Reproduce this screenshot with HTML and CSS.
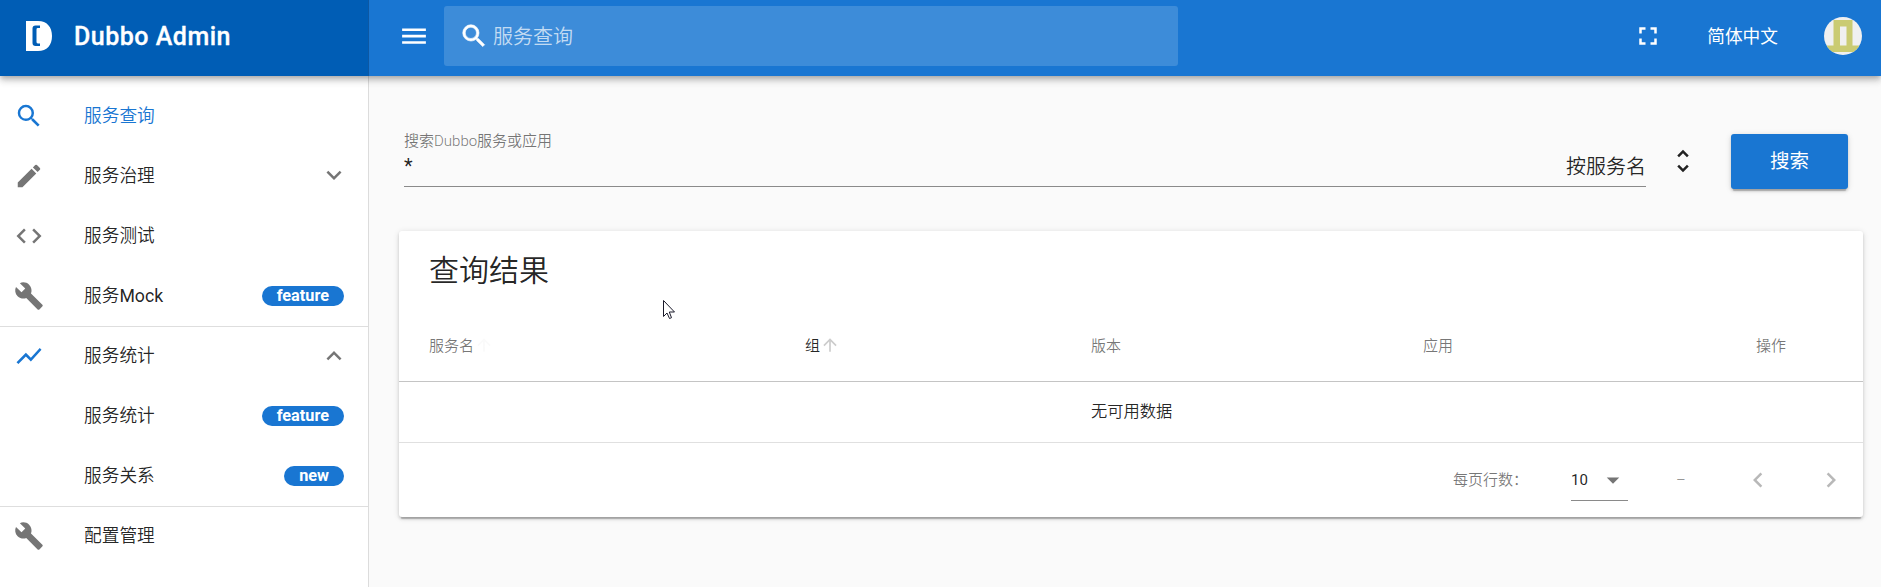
FILE: index.html
```html
<!DOCTYPE html>
<html lang="zh-CN">
<head>
<meta charset="utf-8">
<title>Dubbo Admin</title>
<link rel="stylesheet" href="styles.css">
</head>
<body>
<svg class="defs" width="0" height="0">
  <symbol id="search" viewBox="0 0 24 24"><path d="M15.5 14h-.79l-.28-.27A6.47 6.47 0 0 0 16 9.5 6.5 6.5 0 1 0 9.5 16c1.61 0 3.09-.59 4.23-1.57l.27.28v.79l5 4.99L20.49 19l-4.99-5zm-6 0C7.01 14 5 11.99 5 9.5S7.01 5 9.5 5 14 7.01 14 9.5 11.99 14 9.5 14z"/></symbol>
  <symbol id="edit" viewBox="0 0 24 24"><path d="M3 17.25V21h3.75L17.81 9.94l-3.75-3.75L3 17.25zM20.71 7.04a1 1 0 0 0 0-1.41l-2.34-2.34a1 1 0 0 0-1.41 0l-1.83 1.83 3.75 3.75 1.83-1.83z"/></symbol>
  <symbol id="code" viewBox="0 0 24 24"><path d="M9.4 16.6L4.8 12l4.6-4.6L8 6l-6 6 6 6 1.4-1.4zm5.2 0l4.6-4.6-4.6-4.6L16 6l6 6-6 6-1.4-1.4z"/></symbol>
  <symbol id="build" viewBox="0 0 24 24"><path d="M22.7 19l-9.1-9.1c.9-2.3.4-5-1.5-6.9-2-2-5-2.4-7.4-1.3L9 6 6 9 1.6 4.7C.4 7.1.9 10.1 2.9 12.1c1.900 1.900 4.600 2.400 6.900 1.500l9.100 9.100c.400.400 1 .400 1.400 0l2.300-2.300c.500-.400.500-1.100.100-1.400z"/></symbol>
  <symbol id="chart" viewBox="0 0 24 24"><path d="M3.5 18.49l6-6.01 4 4L22 6.92l-1.41-1.41-7.09 7.97-4-4L2 16.99z"/></symbol>
  <symbol id="down" viewBox="0 0 24 24"><path d="M7.41 7.84L12 12.42l4.59-4.58L18 9.25l-6 6-6-6z"/></symbol>
  <symbol id="up" viewBox="0 0 24 24"><path d="M7.41 15.41L12 10.83l4.59 4.58L18 14l-6-6-6 6z"/></symbol>
  <symbol id="left" viewBox="0 0 24 24"><path d="M15.41 7.41L14 6l-6 6 6 6 1.41-1.41L10.83 12z"/></symbol>
  <symbol id="right" viewBox="0 0 24 24"><path d="M10 6L8.59 7.41 13.17 12l-4.58 4.59L10 18l6-6z"/></symbol>
  <symbol id="menu" viewBox="0 0 24 24"><path d="M2.500 18.200h19v-2.100h-19v2.100zm0-5.100h19V11h-19v2.100zm0-7.200V8h19V5.900h-19z"/></symbol>
  <symbol id="full" viewBox="0 0 24 24"><path d="M7 14H5v5h5v-2H7v-3zm-2-4h2V7h3V5H5v5zm12 7h-3v2h5v-5h-2v3zM14 5v2h3v3h2V5h-5z"/></symbol>
  <symbol id="unfold" viewBox="0 0 24 24"><path d="M12 5.83L15.17 9l1.41-1.41L12 3 7.41 7.59 8.83 9 12 5.83zm0 12.34L8.83 15l-1.41 1.41L12 21l4.59-4.59L15.17 15 12 18.17z"/></symbol>
  <symbol id="caret" viewBox="0 0 24 24"><path d="M7 10l5 5 5-5z"/></symbol>
  <symbol id="arrow" viewBox="0 0 24 24"><path d="M4 12l1.41 1.41L11 7.83V20h2V7.83l5.58 5.59L20 12l-8-8-8 8z"/></symbol>
</svg>
<header class="header">
  <div class="brand">
    <svg class="logo" viewBox="0 0 26 30"><path fill="#fff" fill-rule="evenodd" d="M0 0h12C21 0 26 6 26 15s-5 15-14 15H0zM14 4.500h-4.500a3 3 0 0 0-3 3v14.500a3 3 0 0 0 3 3H14v-2.600h-2.200a1.300 1.300 0 0 1-1.300-1.300V8.400a1.300 1.300 0 0 1 1.300-1.300H14z"/></svg>
    <span>Dubbo Admin</span>
  </div>
  <div class="toolbar">
    <svg class="icon"><use href="#menu"/></svg>
    <div class="top-search"><svg class="icon bold"><use href="#search"/></svg><span>服务查询</span></div>
    <svg class="icon full"><use href="#full"/></svg>
    <span class="lang">简体中文</span>
    <svg class="avatar" viewBox="0 0 38 38"><clipPath id="round"><circle cx="19" cy="19" r="19"/></clipPath><g clip-path="url(#round)"><path fill="#f0f0f0" d="M0 0h38v38H0z"/><path fill="#cacb72" fill-rule="evenodd" d="M9.500 3h19v25.500H38V35H0v-6.500h9.500zM16 9.500v19h6.500v-19z"/></g></svg>
  </div>
</header>
<div class="body">
  <nav class="sidebar">
    <a class="item active"><svg class="icon"><use href="#search"/></svg><span class="label">服务查询</span></a>
    <a class="item"><svg class="icon"><use href="#edit"/></svg><span class="label">服务治理</span><svg class="icon chev"><use href="#down"/></svg></a>
    <a class="item"><svg class="icon"><use href="#code"/></svg><span class="label">服务测试</span></a>
    <a class="item"><svg class="icon"><use href="#build"/></svg><span class="label">服务<span class="latin">Mock</span></span><b class="badge">feature</b></a>
    <hr class="divider">
    <a class="item"><svg class="icon blue"><use href="#chart"/></svg><span class="label">服务统计</span><svg class="icon chev"><use href="#up"/></svg></a>
    <a class="item"><i class="icon"></i><span class="label">服务统计</span><b class="badge">feature</b></a>
    <a class="item"><i class="icon"></i><span class="label">服务关系</span><b class="badge">new</b></a>
    <hr class="divider">
    <a class="item"><svg class="icon"><use href="#build"/></svg><span class="label">配置管理</span></a>
  </nav>
  <main class="main">
    <section class="filter">
      <div class="field">
        <label class="field-label">搜索Dubbo服务或应用</label>
        <div class="field-row"><span class="value">*</span><span class="kind">按服务名</span></div>
      </div>
      <svg class="icon unfold"><use href="#unfold"/></svg>
      <button class="btn">搜索</button>
    </section>
    <section class="card">
      <h1 class="title">查询结果</h1>
      <div class="row head">
        <span>服务名<svg class="sort faint"><use href="#arrow"/></svg></span>
        <span class="sorted">组<svg class="sort"><use href="#arrow"/></svg></span>
        <span>版本</span><span>应用</span><span>操作</span>
      </div>
      <div class="row empty"><span class="nodata">无可用数据</span></div>
      <div class="pager">
        <span class="per">每页行数：</span>
        <div class="select"><span>10</span><svg class="icon"><use href="#caret"/></svg></div>
        <span class="range">–</span>
        <svg class="icon prev"><use href="#left"/></svg>
        <svg class="icon next"><use href="#right"/></svg>
      </div>
    </section>
  </main>
</div>
<svg class="cursor" viewBox="0 0 13 20"><path d="M.5.500V16.500L4 13l2.500 5.500 2-.8L6.300 12h5.200z" fill="#fff" stroke="#1a1a2a" stroke-width="1"/></svg>
</body>
</html>
```
FILE: styles.css
```css
* { box-sizing: border-box; }
body {
  margin: 0;
  height: 587px;
  overflow: hidden;
  display: flex;
  flex-direction: column;
  background: #fafafa;
  color: rgba(0, 0, 0, .87);
  font-family: Roboto, "Noto Sans CJK SC", sans-serif;
  font-weight: 350;
}
.defs { position: absolute; }
.icon { width: 30px; height: 30px; flex: none; fill: currentColor; }
.bold { stroke: currentColor; stroke-width: .5px; }
.header {
  position: relative;
  z-index: 2;
  display: flex;
  height: 76px;
  flex: none;
  color: #fff;
  background: #1976d2;
  box-shadow: 0 2px 5px -1px rgba(0,0,0,.2), 0 5px 6px 0 rgba(0,0,0,.14), 0 1px 12px 0 rgba(0,0,0,.12);
}
.brand {
  width: 369px;
  display: flex;
  align-items: center;
  padding: 0 0 4px 26px;
  background: #005db5;
  border-right: 1px solid #0d58a3;
  font-size: 25px;
  font-weight: 500;
  letter-spacing: .5px;
  -webkit-text-stroke: .3px currentColor;
}
.logo { width: 26px; height: 30px; margin-right: 22px; }
.toolbar { flex: 1; display: flex; align-items: center; padding: 0 19px 4px 30px; }
.top-search {
  width: 734px;
  height: 60px;
  margin-left: 15px;
  padding-left: 15px;
  display: flex;
  align-items: center;
  border-radius: 3px;
  background: rgba(255,255,255,.16);
  font-size: 20px;
}
.top-search span { margin-left: 4px; padding-bottom: 2px; color: rgba(255,255,255,.7); }
.full { margin-left: auto; }
.lang { margin-left: 44px; padding-bottom: 2px; font-size: 17.700px; font-weight: 400; }
.avatar { width: 38px; height: 38px; margin-left: 46px; }
.body { flex: 1; display: flex; min-height: 0; }
.sidebar { width: 369px; flex: none; padding-top: 10px; background: #fff; border-right: 1px solid #dcdcdc; }
.item {
  height: 60px;
  display: flex;
  align-items: center;
  padding: 0 24px 0 14px;
  font-size: 17.700px;
}
.item > .icon { color: #757575; }
.item.active, .item.active > .icon, .item > .blue { color: #1976d2; }
.label { margin-left: 40px; flex: 1; padding-bottom: 4px; }
.latin { font-weight: 400; }
.item > .chev { margin-right: -5px; }
.badge {
  height: 20px;
  padding: 0 15px;
  border-radius: 10px;
  background: #1976d2;
  color: #fff;
  font-size: 16.250px;
  font-weight: 700;
  line-height: 20px;
}
.divider { height: 1px; margin: 0 0 -1px; border: 0; background: #dedede; position: relative; }
.main { flex: 1; padding: 58px 18px 0 30px; }
.filter { display: flex; height: 97px; padding: 0 15px 0 5px; align-items: flex-start; }
.field { width: 1242px; height: 53px; border-bottom: 1px solid #8a8a8a; }
.field-label { display: block; font-size: 15px; line-height: 14px; color: rgba(0,0,0,.54); }
.field-row { display: flex; justify-content: space-between; font-size: 20px; line-height: 24px; }
.value { font-weight: 400; padding-top: 6px; }
.kind { padding: 7px 0 0; }
.unfold { margin: 12px 0 0 22px; }
.btn {
  width: 117px;
  height: 55px;
  margin-left: auto;
  border: 0;
  border-radius: 3px;
  padding: 0 0 5px;
  background: #1976d2;
  color: #fff;
  font: 400 19.500px "Noto Sans CJK SC", sans-serif;
  box-shadow: 0 4px 1px -2px rgba(0,0,0,.2), 0 2px 3px 0 rgba(0,0,0,.14), 0 1px 6px 0 rgba(0,0,0,.12);
}
.card {
  height: 286px;
  border-radius: 3px;
  background: #fff;
  box-shadow: 0 4px 1px -2px rgba(0,0,0,.2), 0 2px 3px 0 rgba(0,0,0,.14), 0 1px 6px 0 rgba(0,0,0,.12);
}
.title { margin: 0; padding-left: 30px; height: 80px; line-height: 79px; font-size: 30px; font-weight: 350; }
.row { display: grid; grid-template-columns: 376px 286px 332px 333px 1fr; padding-left: 30px; align-items: center; }
.row span { display: flex; align-items: center; }
.head { height: 71px; padding-bottom: 4px; border-bottom: 1px solid #c4c4c4; font-size: 15px; color: rgba(0,0,0,.54); }
.head .sorted { color: rgba(0,0,0,.87); }
.sort { width: 20px; height: 20px; fill: #ccc; position: relative; top: 1px; }
.faint { fill: #fafafa; }
.empty { height: 61px; padding-bottom: 4px; border-bottom: 1px solid #e0e0e0; font-size: 16.250px; }
.nodata { grid-column: 3; }
.pager { height: 74px; display: flex; align-items: center; justify-content: flex-end; padding-right: 17px; font-size: 15px; color: rgba(0,0,0,.54); }
.per { padding-bottom: 3px; }
.select { width: 57px; height: 41px; margin-left: 43px; display: flex; align-items: center; border-bottom: 1px solid #8a8a8a; font-weight: 400; color: rgba(0,0,0,.87); }
.select .icon { margin-left: 10px; color: #757575; }
.range { width: 8px; margin-left: 48px; }
.prev, .next { color: #b8b8b8; }
.prev { margin-left: 59px; }
.next { margin-left: 43px; }
.cursor { position: absolute; left: 663px; top: 300px; width: 13px; height: 20px; z-index: 3; }
```
